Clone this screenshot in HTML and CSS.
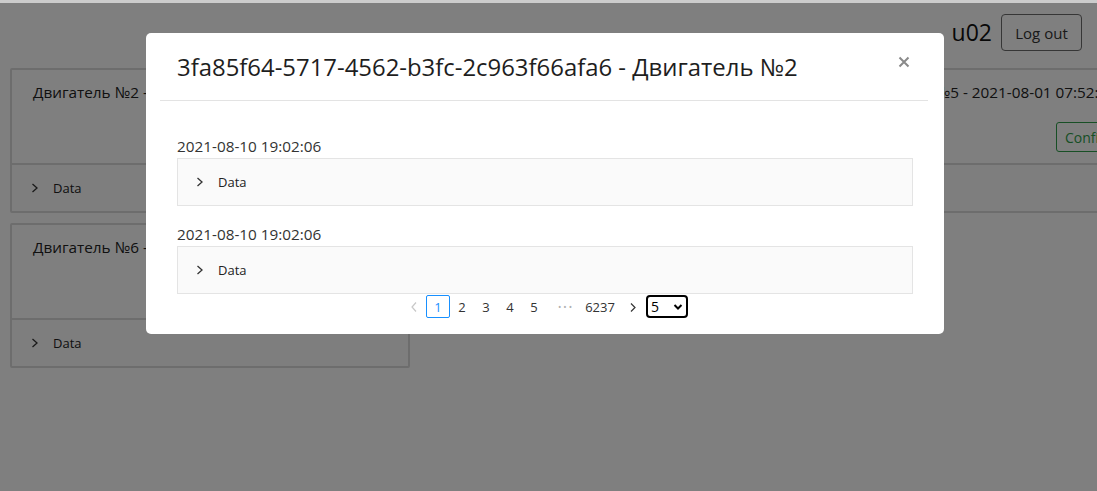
FILE: index.html
```html
<!DOCTYPE html>
<html lang="ru">
<head>
<meta charset="utf-8">
<title>Modal</title>
<link rel="stylesheet" href="styles.css">
</head>
<body>
<div class="page">
  <header class="topbar">
    <span class="user">u02</span>
    <button class="btn-logout">Log out</button>
  </header>
  <main class="cards">
    <section class="card">
      <div class="card-body">
        <div class="card-title">Двигатель №2 - 2021-08-01 07:52:14</div>
        <div class="card-actions"><button class="btn-ok">Confirm</button><button class="btn-no">Reject</button></div>
      </div>
      <div class="card-foot"><svg class="chev" viewBox="0 0 8 10"><polyline points="1.5,1 6,5 1.5,9"/></svg><span>Data</span></div>
    </section>
    <section class="card">
      <div class="card-body">
        <div class="card-title">Двигатель №3 - 2021-08-01 07:52:14</div>
        <div class="card-actions"><button class="btn-ok">Confirm</button><button class="btn-no">Reject</button></div>
      </div>
      <div class="card-foot"><svg class="chev" viewBox="0 0 8 10"><polyline points="1.5,1 6,5 1.5,9"/></svg><span>Data</span></div>
    </section>
    <section class="card">
      <div class="card-body">
        <div class="card-title">Двигатель №5 - 2021-08-01 07:52:14</div>
        <div class="card-actions"><button class="btn-ok">Confirm</button><button class="btn-no">Reject</button></div>
      </div>
      <div class="card-foot"><svg class="chev" viewBox="0 0 8 10"><polyline points="1.5,1 6,5 1.5,9"/></svg><span>Data</span></div>
    </section>
    <section class="card">
      <div class="card-body">
        <div class="card-title">Двигатель №6 - 2021-08-01 07:52:14</div>
        <div class="card-actions"><button class="btn-ok">Confirm</button><button class="btn-no">Reject</button></div>
      </div>
      <div class="card-foot"><svg class="chev" viewBox="0 0 8 10"><polyline points="1.5,1 6,5 1.5,9"/></svg><span>Data</span></div>
    </section>
  </main>
</div>

<div class="overlay">
  <div class="modal">
    <div class="modal-header">
      <h2 class="modal-title">3fa85f64-5717-4562-b3fc-2c963f66afa6 - Двигатель №2</h2>
      <svg class="close" viewBox="0 0 12 12"><path d="M1.5 1.5 L10.5 10.5 M10.5 1.5 L1.5 10.5"/></svg>
    </div>
    <div class="modal-body">
      <div class="entry">
        <div class="entry-date">2021-08-10 19:02:06</div>
        <div class="acc"><svg class="chev" viewBox="0 0 8 10"><polyline points="1.5,1 6,5 1.5,9"/></svg><span>Data</span></div>
      </div>
      <div class="entry">
        <div class="entry-date">2021-08-10 19:02:06</div>
        <div class="acc"><svg class="chev" viewBox="0 0 8 10"><polyline points="1.5,1 6,5 1.5,9"/></svg><span>Data</span></div>
      </div>
      <nav class="pager">
        <span class="pg-nav disabled"><svg viewBox="0 0 8 12"><polyline points="6,1.5 2,6 6,10.5"/></svg></span>
        <span class="pg-item active">1</span>
        <span class="pg-item">2</span>
        <span class="pg-item">3</span>
        <span class="pg-item">4</span>
        <span class="pg-item">5</span>
        <span class="pg-dots">•••</span>
        <span class="pg-item wide">6237</span>
        <span class="pg-nav next"><svg viewBox="0 0 8 12"><polyline points="2,2.5 6,6.5 2,10.5"/></svg></span>
        <span class="pg-size"><span>5</span><svg viewBox="0 0 10 8"><polyline points="1.5,2 5,5.5 8.5,2"/></svg></span>
      </nav>
    </div>
  </div>
</div>
</body>
</html>
```

FILE: styles.css
```css
* { box-sizing: border-box; }
html, body { margin: 0; padding: 0; }
body {
  width: 1097px;
  height: 491px;
  overflow: hidden;
  background: #fff;
  font-family: "Open Sans", "Noto Sans", sans-serif;
  color: #212529;
}
.page { width: 1097px; }

.topbar {
  display: flex;
  justify-content: flex-end;
  align-items: flex-start;
  gap: 9px;
  padding: 14px 15px 0 0;
  height: 68px;
}
.user {
  font-size: 23px;
  line-height: 37px;
  color: #111;
}
.btn-logout {
  width: 81px;
  height: 37px;
  border: 1px solid #6c6c6c;
  border-radius: 4px;
  background: #fff;
  color: #333;
  font-family: inherit;
  font-size: 15px;
  padding: 0;
}

.cards {
  display: grid;
  grid-template-columns: repeat(3, 400px);
  column-gap: 10px;
  row-gap: 10px;
  padding-left: 10px;
}
.card {
  border: 2px solid #dadada;
  border-radius: 2px;
  background: #fff;
}
.card-body {
  height: 93px;
  padding: 12px 21px 0 21px;
  display: flex;
  flex-direction: column;
}
.card-title {
  font-size: 15.3px;
  line-height: 20px;
  color: #222;
  white-space: nowrap;
}
.card-actions {
  margin-top: 20px;
  display: flex;
  gap: 8px;
  padding-left: 203px;
}
.btn-ok, .btn-no {
  height: 30px;
  padding: 0 8px;
  border-radius: 3px;
  background: #fff;
  font-family: inherit;
  font-size: 14px;
}
.btn-ok { border: 1px solid #2e9e4a; color: #2e9e4a; }
.btn-no { border: 1px solid #d9534f; color: #d9534f; }
.card-foot {
  height: 48px;
  border-top: 2px solid #dadada;
  background: #fcfcfc;
  display: flex;
  align-items: center;
  padding-left: 19px;
  font-size: 13px;
  color: #222;
}
.chev {
  width: 8px;
  height: 10px;
  margin-right: 14px;
  fill: none;
  stroke: #333;
  stroke-width: 1.3;
}

.overlay {
  position: fixed;
  inset: 0;
  background: rgba(0, 0, 0, 0.5);
  background-clip: padding-box;
  border-top: 3px solid rgba(0, 0, 0, 0.2);
  padding: 30px 0 0 146px;
}
.modal {
  width: 798px;
  background: #fff;
  border-radius: 5px;
  padding-bottom: 16px;
}
.modal-header {
  margin: 0 16px 0 14px;
  height: 68px;
  border-bottom: 1px solid #e3e3e3;
  display: flex;
  align-items: center;
  justify-content: space-between;
  padding: 0 18px 0 17px;
}
.modal-title {
  margin: 0;
  font-weight: 400;
  font-size: 23.9px;
  color: #1e1e1e;
  white-space: nowrap;
}
.close {
  width: 12px;
  height: 12px;
  fill: none;
  stroke: #8a8a8a;
  stroke-width: 2;
  margin-top: -10px;
}
.modal-body {
  padding: 35px 31px 0 31px;
}
.entry { margin-bottom: 18px; }
.entry:nth-of-type(2) { margin-bottom: 1px; }
.entry-date {
  font-size: 15.3px;
  line-height: 20px;
  color: #333;
  margin-bottom: 2px;
}
.acc {
  height: 48px;
  border: 1px solid #e4e4e4;
  background: #fafafa;
  display: flex;
  align-items: center;
  padding-left: 18px;
  font-size: 13px;
  color: #222;
}
.pager {
  display: flex;
  justify-content: center;
  align-items: center;
  height: 23px;
  font-size: 13px;
  color: #333;
}
.pg-item, .pg-nav {
  width: 24px;
  height: 23px;
  display: flex;
  align-items: center;
  justify-content: center;
  border: 1px solid transparent;
  border-radius: 2px;
}
.pg-item.wide { width: 36px; }
.pg-item.active { border-color: #1890ff; color: #1890ff; }
.pg-dots {
  width: 36px;
  text-align: center;
  font-size: 9px;
  letter-spacing: 2px;
  color: #b0b0b0;
  padding-left: 4px;
}
.pg-nav svg {
  width: 8px;
  height: 12px;
  fill: none;
  stroke: #333;
  stroke-width: 1.2;
}
.pg-nav.disabled svg { stroke: #c8c8c8; }
.pg-nav.next { justify-content: flex-end; padding-right: 4px; }
.pg-size {
  margin-left: 4px;
  width: 42px;
  height: 23px;
  border: 2px solid #000;
  border-radius: 4px;
  display: flex;
  align-items: center;
  justify-content: space-between;
  padding: 0 3px 0 3px;
  font-size: 14px;
  color: #000;
}
.pg-size svg {
  width: 10px;
  height: 8px;
  fill: none;
  stroke: #000;
  stroke-width: 2;
}
```
